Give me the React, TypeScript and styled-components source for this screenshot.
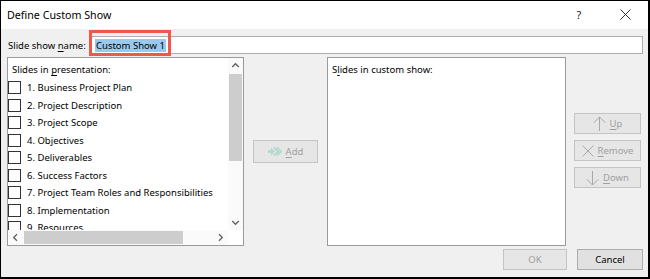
import styled, {createGlobalStyle} from 'styled-components';

const presentationSlides = [
    '1. Business Project Plan',
    '2. Project Description',
    '3. Project Scope',
    '4. Objectives',
    '5. Deliverables',
    '6. Success Factors',
    '7. Project Team Roles and Responsibilities',
    '8. Implementation',
    '9. Resources',
]

const GlobalStyle = createGlobalStyle`
  html, body {
    margin: 0;
    padding: 0;
    background: #ffffff;
  }

  body {
    font-family: "Noto Sans", "DejaVu Sans", sans-serif;
    font-size: 9.5px;
    color: #000000;
  }
`

const Chevron = ({dir}: { dir: 'up' | 'down' | 'left' | 'right' }) => {
    const rot = {up: 0, right: 90, down: 180, left: 270}[dir]
    return (
        <svg width="9" height="9" viewBox="0 0 9 9" style={{transform: `rotate(${rot}deg)`}}>
            <path d="M1.2 6 L4.5 2.7 L7.8 6" fill="none" stroke="#606060" strokeWidth="1.3"/>
        </svg>
    )
}

const AddIcon = () => (
    <svg width="14" height="9" viewBox="0 0 14 9">
        <path d="M0 3 H3 V0.5 L7 4.5 L3 8.5 V6 H0 Z" fill="#b5d8cf"/>
        <path d="M6 0.5 L10 4.5 L6 8.5 M9 0.5 L13 4.5 L9 8.5" fill="none" stroke="#b5d8cf" strokeWidth="2"/>
    </svg>
)

const ArrowIcon = ({down}: { down?: boolean }) => (
    <svg width="13" height="16" viewBox="0 0 13 16" style={{transform: down ? 'rotate(180deg)' : undefined}}>
        <path d="M6.5 1 V15 M0.8 6.7 L6.5 1 L12.2 6.7" fill="none" stroke="#a8a8a8" strokeWidth="1"/>
    </svg>
)

const CrossIcon = ({color, size}: { color: string, size: number }) => (
    <svg width={size} height={size} viewBox="0 0 12 12">
        <path d="M0.5 0.5 L11.5 11.5 M11.5 0.5 L0.5 11.5" fill="none" stroke={color} strokeWidth="1"/>
    </svg>
)

export default function App() {
    return (
        <>
            <GlobalStyle/>
            <Window>
                <TitleBar>
                    <Title>Define Custom Show</Title>
                    <TitleControls>
                        <Help>?</Help>
                        <CloseButton><CrossIcon color="#222222" size={11}/></CloseButton>
                    </TitleControls>
                </TitleBar>

                <Body>
                    <NameRow>
                        <Label>Slide show <Key>n</Key>ame:</Label>
                        <NameField>
                            <Selection>Custom Show 1</Selection>
                            <Callout/>
                        </NameField>
                    </NameRow>

                    <Main>
                        <ListBox $width={237} $scroll>
                            <ListContent>
                                <ListHeader>Slides in <Key>p</Key>resentation:</ListHeader>
                                {presentationSlides.map((slide) => (
                                    <SlideRow key={slide}>
                                        <Checkbox/>
                                        <SlideName>{slide}</SlideName>
                                    </SlideRow>
                                ))}
                            </ListContent>
                            <VScroll>
                                <ArrowCell><Chevron dir="up"/></ArrowCell>
                                <VTrack><VThumb/></VTrack>
                                <ArrowCell><Chevron dir="down"/></ArrowCell>
                            </VScroll>
                            <HScroll>
                                <ArrowCell><Chevron dir="left"/></ArrowCell>
                                <HTrack><HThumb/></HTrack>
                                <ArrowCell><Chevron dir="right"/></ArrowCell>
                            </HScroll>
                            <Corner/>
                        </ListBox>

                        <AddColumn>
                            <DialogButton disabled $width={65} $height={23}>
                                <AddIcon/><span><Key>A</Key>dd</span>
                            </DialogButton>
                        </AddColumn>

                        <ListBox $width={239}>
                            <ListContent>
                                <ListHeader>S<Key>l</Key>ides in custom show:</ListHeader>
                            </ListContent>
                        </ListBox>

                        <OrderColumn>
                            <DialogButton disabled $width={67}>
                                <ArrowIcon/><span><Key>U</Key>p</span>
                            </DialogButton>
                            <DialogButton disabled $width={67}>
                                <CrossIcon color="#a8a8a8" size={12}/><span><Key>R</Key>emove</span>
                            </DialogButton>
                            <DialogButton disabled $width={67}>
                                <ArrowIcon down/><span><Key>D</Key>own</span>
                            </DialogButton>
                        </OrderColumn>
                    </Main>

                    <Footer>
                        <DialogButton disabled $width={64}>OK</DialogButton>
                        <DialogButton $width={66}>Cancel</DialogButton>
                    </Footer>
                </Body>
            </Window>
        </>
    )
}

const Window = styled.div`
  box-sizing: border-box;
  width: 650px;
  height: 279px;
  border: 2px solid #000000;
  border-top-width: 1px;
  border-left-width: 1px;
  background: #f0f0f0;
  display: flex;
  flex-direction: column;
  overflow: hidden;
`

const TitleBar = styled.div`
  height: 28px;
  background: #ffffff;
  display: flex;
  align-items: center;
  justify-content: space-between;
  padding-left: 6px;
`

const Title = styled.div`
  font-size: 10.7px;
  margin-top: -1px;
`

const TitleControls = styled.div`
  display: flex;
  align-items: center;
  height: 100%;
`

const Help = styled.div`
  width: 46px;
  text-align: center;
  font-size: 11px;
  color: #222222;
  margin-top: -2px;
`

const CloseButton = styled.div`
  width: 46px;
  display: flex;
  justify-content: center;
  margin-top: -1px;
`

const Body = styled.div`
  flex: 1;
  display: flex;
  flex-direction: column;
  padding: 7px 5px 7px 6px;
`

const NameRow = styled.div`
  display: flex;
  align-items: center;
  height: 18px;
`

const Label = styled.div`
  width: 83px;
  padding-left: 1px;
  white-space: nowrap;
`

const Key = styled.span`
  text-decoration: underline;
  text-underline-offset: 2px;
`

const NameField = styled.div`
  position: relative;
  flex: 1;
  box-sizing: border-box;
  height: 18px;
  background: #ffffff;
  border: 1px solid #adadad;
  display: flex;
  align-items: center;
  padding-left: 3px;
`

const Selection = styled.span`
  background: #99c9ef;
  line-height: 13px;
  padding: 0 1px;
`

const Callout = styled.div`
  position: absolute;
  left: -3px;
  top: -7px;
  width: 82px;
  height: 26px;
  box-sizing: border-box;
  border: 3px solid #f0584a;
`

const Main = styled.div`
  display: flex;
  margin-top: 3px;
  height: 189px;
`

const ListBox = styled.div<{ $width: number, $scroll?: boolean }>`
  box-sizing: border-box;
  width: ${(p) => p.$width}px;
  height: 100%;
  background: #ffffff;
  border: 1px solid #9a9a9a;
  display: grid;
  grid-template-columns: ${(p) => (p.$scroll ? '1fr 15px' : '1fr')};
  grid-template-rows: ${(p) => (p.$scroll ? '1fr 15px' : '1fr')};
  overflow: hidden;
`

const ListContent = styled.div`
  overflow: hidden;
  display: flex;
  flex-direction: column;
  min-height: 0;
`

const ListHeader = styled.div`
  padding: 3px 0 0 4px;
  height: 18px;
  line-height: 17px;
  flex-shrink: 0;
`

const SlideRow = styled.div`
  display: flex;
  align-items: center;
  height: 17.5px;
  flex-shrink: 0;
  white-space: nowrap;
`

const Checkbox = styled.span`
  box-sizing: border-box;
  width: 13px;
  height: 13px;
  border: 1px solid #333333;
  background: #ffffff;
  flex-shrink: 0;
`

const SlideName = styled.span`
  margin-left: 6px;
`

const VScroll = styled.div`
  display: flex;
  flex-direction: column;
  background: #fafafa;
`

const HScroll = styled.div`
  display: flex;
  background: #fafafa;
`

const ArrowCell = styled.div`
  width: 15px;
  height: 15px;
  flex-shrink: 0;
  display: flex;
  align-items: center;
  justify-content: center;
`

const VTrack = styled.div`
  flex: 1;
  padding: 1px 1px 0;
`

const VThumb = styled.div`
  height: 87px;
  background: #cdcdcd;
`

const HTrack = styled.div`
  flex: 1;
  padding: 1px 0 1px 1px;
`

const HThumb = styled.div`
  width: 159px;
  height: 100%;
  background: #cdcdcd;
`

const Corner = styled.div`
  background: #ffffff;
`

const AddColumn = styled.div`
  width: 83px;
  display: flex;
  align-items: center;
  justify-content: center;
`

const OrderColumn = styled.div`
  margin-left: 8px;
  display: flex;
  flex-direction: column;
  justify-content: center;
  gap: 6px;
  padding-bottom: 2px;
`

const DialogButton = styled.button<{ $width: number, $height?: number }>`
  box-sizing: border-box;
  width: ${(p) => p.$width}px;
  height: ${(p) => p.$height ?? 21}px;
  padding: 0;
  font-family: inherit;
  font-size: 9.5px;
  display: flex;
  align-items: center;
  justify-content: center;
  gap: 4px;
  background: #e1e1e1;
  border: 1px solid #adadad;
  color: #000000;

  &:disabled {
    background: #e6e6e6;
    border-color: #c4c4c4;
    color: #a0a0a0;
  }
`

const Footer = styled.div`
  margin-top: 3px;
  display: flex;
  justify-content: flex-end;
  gap: 10px;
`
